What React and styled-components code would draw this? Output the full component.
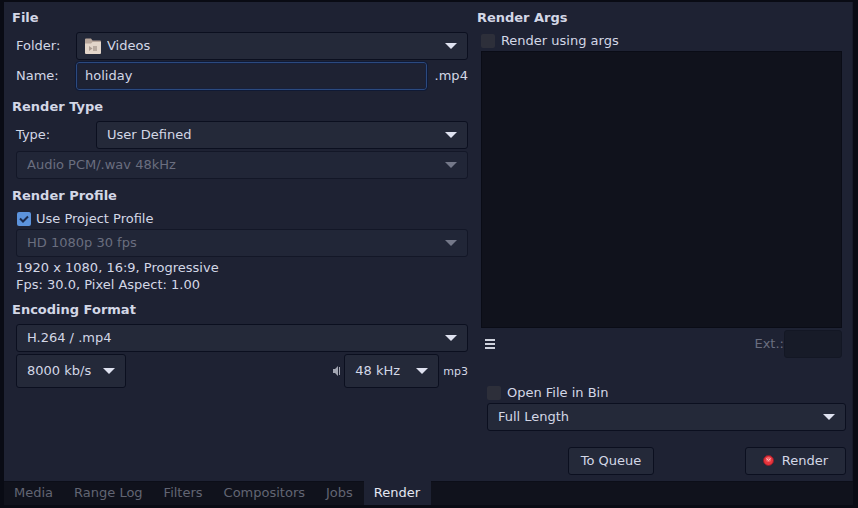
import React, { useState } from "react";
import styled, { createGlobalStyle, css } from "styled-components";

const color = {
  edge: "#090b14",
  well: "#10121c",
  panel: "#1e2233",
  control: "#242939",
  line: "#0b0f1f",
  text: "#d3d7e6",
  dim: "#6a6e7f",
};

const GlobalStyle = createGlobalStyle`
  * { box-sizing: border-box; }
  body {
    margin: 0;
    background: ${color.edge};
    color: ${color.text};
    font: 13px/17px "DejaVu Sans", Verdana, sans-serif;
  }
  button, input, select, textarea { font: inherit; color: inherit; margin: 0; }
`;

const Window = styled.div`
  display: flex;
  flex-direction: column;
  min-height: 100vh;
  padding: 2px 5px 3px 4px;
`;

const Panel = styled.main`
  flex: 1;
  display: grid;
  grid-template-columns: minmax(0, 21fr) minmax(0, 17fr);
  column-gap: 9px;
  padding: 7px 6px 6px 8px;
  background: ${color.panel};
  border-right: 1px solid #181b2a;
`;

const Column = styled.div`
  display: flex;
  flex-direction: column;
  gap: 8px;
`;

const Section = styled.section`
  display: flex;
  flex-direction: column;
  gap: 5px;
  flex: ${(p) => (p.$grow ? 1 : "none")};
`;

const Title = styled.h2`
  margin: 0;
  font-size: 13px;
  line-height: 18px;
  font-weight: bold;
`;

const Body = styled.div`
  display: flex;
  flex-direction: column;
  flex: 1;
  gap: 2px;
  padding-left: 4px;
  padding-right: ${(p) => (p.$inset ? "4px" : 0)};
`;

const Row = styled.div`
  display: flex;
  align-items: center;
`;

const FieldLabel = styled.label`
  flex: none;
  width: ${(p) => (p.$wide ? "80px" : "60px")};
  padding-bottom: 2px;
`;

const controlFrame = css`
  height: ${(p) => (p.$tall ? "34px" : "28px")};
  background: ${color.control};
  border: 1px solid ${color.line};
  border-radius: 3px;
`;

const SelectShell = styled.div`
  display: grid;
  align-items: center;
  flex: ${(p) => (p.$width ? "none" : 1)};
  width: ${(p) => p.$width || "auto"};
  min-width: 0;
  color: ${(p) => (p.$disabled ? color.dim : color.text)};
  > * { grid-area: 1 / 1; }
  > svg { pointer-events: none; z-index: 1; }
`;

const Native = styled.select`
  ${controlFrame}
  appearance: none;
  width: 100%;
  padding: 0 30px 2px ${(p) => (p.$icon ? "30px" : "10px")};
  outline: none;
  opacity: 1;
  &:disabled { background: #212637; border-color: #131727; color: ${color.dim}; }
`;

const Arrow = styled.svg`
  justify-self: end;
  margin-right: 11px;
  fill: ${(p) => (p.$disabled ? "#747889" : "#dfe2f0")};
`;

const FolderSvg = styled.svg`
  margin-left: 9px;
`;

function FolderIcon() {
  return (
    <FolderSvg width="16" height="16" viewBox="0 0 16 16" aria-hidden="true">
      <path d="M0 1.5Q0 .5 1 .5h5l1.5 2H15q1 0 1 1V8H0z" fill="#b7a69b" />
      <path d="M0 5.5h6l1.5-1.5H16V15q0 1-1 1H1q-1 0-1-1z" fill="#e3d6ca" />
      <path d="M4 8l3.5 2.5L4 13z" fill="#a99a90" />
      <path d="M8 8h4v5H8z" fill="#a99a90" />
      <path d="M9 8v5M11 8v5" stroke="#c8bbb0" strokeWidth="1" />
    </FolderSvg>
  );
}

function Select({ id, label, options, disabled, tall, width, icon }) {
  return (
    <SelectShell $disabled={disabled} $width={width}>
      <Native id={id} aria-label={label} disabled={disabled} $tall={tall} $icon={!!icon}>
        {options.map((o) => (
          <option key={o}>{o}</option>
        ))}
      </Native>
      {icon}
      <Arrow $disabled={disabled} width="12" height="6" viewBox="0 0 12 6" aria-hidden="true">
        <path d="M0 0h12L6 6z" />
      </Arrow>
    </SelectShell>
  );
}

const NameInput = styled.input`
  ${controlFrame}
  flex: 1;
  min-width: 0;
  padding: 0 8px 2px 8px;
  background: ${color.panel};
  border-color: #2b4a80;
  box-shadow: inset 0 0 0 1px #18213c;
  outline: 1px solid #101a35;
  outline-offset: 0;
`;

const Suffix = styled.span`
  flex: none;
  margin-left: ${(p) => (p.$small ? "4px" : "8px")};
  padding-bottom: ${(p) => (p.$small ? 0 : "2px")};
  font-size: ${(p) => (p.$small ? "11px" : "13px")};
`;

const Check = styled.label`
  display: flex;
  align-items: center;
  gap: 5px;
  height: 17px;
`;

const BoxShell = styled.span`
  display: grid;
  place-items: center;
  width: 15px;
  height: 14px;
  > * { grid-area: 1 / 1; }
  > svg { pointer-events: none; z-index: 1; }
`;

const Box = styled.input`
  appearance: none;
  width: 14px;
  height: 14px;
  border-radius: 2px;
  background: #2d2f3a;
  &:checked { background: #5c93dc; }
`;

function Checkbox({ children, defaultChecked }) {
  const [on, setOn] = useState(!!defaultChecked);
  return (
    <Check>
      <BoxShell>
        <Box type="checkbox" checked={on} onChange={(e) => setOn(e.target.checked)} />
        {on && (
          <svg width="10" height="10" viewBox="0 0 10 10" aria-hidden="true">
            <path d="M1 4.5L4 7.5l5-5" fill="none" stroke="#1b2a4c" strokeWidth="2" />
          </svg>
        )}
      </BoxShell>
      {children}
    </Check>
  );
}

const Info = styled.p`
  margin: 0;
`;

const Spacer = styled.div`
  flex: 1;
`;

const SpeakerSvg = styled.svg`
  flex: none;
  margin-right: 3px;
`;

const Args = styled.textarea`
  flex: 1;
  width: 100%;
  min-height: 120px;
  resize: none;
  padding: 4px;
  background: ${color.well};
  border: 1px solid #0a0c16;
  outline: none;
`;

const IconButton = styled.button`
  display: flex;
  padding: 4px;
  background: none;
  border: 0;
`;

const ExtLabel = styled.label`
  padding-bottom: 2px;
  color: ${color.dim};
`;

const ExtInput = styled.input`
  ${controlFrame}
  width: 58px;
  background: #171b28;
  border-color: #131724;
`;

const Output = styled.div`
  display: flex;
  flex-direction: column;
  gap: 2px;
  margin-top: 18px;
  padding-left: 10px;
`;

const Actions = styled.div`
  display: flex;
  justify-content: flex-end;
  gap: 91px;
  margin-top: 8px;
`;

const Button = styled.button`
  ${controlFrame}
  display: flex;
  align-items: center;
  justify-content: center;
  gap: ${(p) => (p.$wide ? "8px" : 0)};
  min-width: ${(p) => (p.$wide ? "101px" : "86px")};
  padding: 0 0 1px;
`;

const Tabs = styled.nav`
  display: flex;
  height: 24px;
  background: ${color.well};
  border-top: 1px solid #0c0e18;
`;

const Tab = styled.button`
  height: 24px;
  margin-top: -1px;
  padding: 0 11px 1px 10px;
  border: 0;
  background: ${(p) => (p.$active ? color.panel : "none")};
  color: ${(p) => (p.$active ? "#e4e7f2" : "#626573")};
`;

const TABS = ["Media", "Range Log", "Filters", "Compositors", "Jobs", "Render"];

export default function App() {
  const [tab, setTab] = useState("Render");
  return (
    <>
      <GlobalStyle />
      <Window>
        <Panel>
          <Column>
            <Section>
              <Title>File</Title>
              <Body>
                <Row>
                  <FieldLabel htmlFor="folder">Folder:</FieldLabel>
                  <Select id="folder" options={["Videos"]} icon={<FolderIcon />} />
                </Row>
                <Row>
                  <FieldLabel htmlFor="name">Name:</FieldLabel>
                  <NameInput id="name" defaultValue="holiday" />
                  <Suffix>.mp4</Suffix>
                </Row>
              </Body>
            </Section>

            <Section>
              <Title>Render Type</Title>
              <Body>
                <Row>
                  <FieldLabel htmlFor="type" $wide>Type:</FieldLabel>
                  <Select id="type" options={["User Defined"]} />
                </Row>
                <Row>
                  <Select label="Preset" options={["Audio PCM/.wav 48kHz"]} disabled />
                </Row>
              </Body>
            </Section>

            <Section>
              <Title>Render Profile</Title>
              <Body>
                <Checkbox defaultChecked>Use Project Profile</Checkbox>
                <Row>
                  <Select label="Profile" options={["HD 1080p 30 fps"]} disabled />
                </Row>
                <Info>
                  1920 x 1080, 16:9, Progressive
                  <br />
                  Fps: 30.0, Pixel Aspect: 1.00
                </Info>
              </Body>
            </Section>

            <Section>
              <Title>Encoding Format</Title>
              <Body>
                <Row>
                  <Select label="Encoding" options={["H.264 / .mp4"]} />
                </Row>
                <Row>
                  <Select label="Quality" options={["8000 kb/s"]} tall width="110px" />
                  <Spacer />
                  <SpeakerSvg width="8" height="10" viewBox="0 0 8 10" aria-hidden="true">
                    <path d="M0 3h2l3-3v10L2 7H0z" fill="#a3a6b2" />
                    <path d="M6.5 1v8" stroke="#a3a6b2" />
                  </SpeakerSvg>
                  <Select label="Sample rate" options={["48 kHz"]} tall width="95px" />
                  <Suffix $small>mp3</Suffix>
                </Row>
              </Body>
            </Section>
          </Column>

          <Column>
            <Section $grow>
              <Title>Render Args</Title>
              <Body $inset>
                <Checkbox>Render using args</Checkbox>
                <Args aria-label="Render args" />
                <Row>
                  <IconButton aria-label="Args menu">
                    <svg width="10" height="10" viewBox="0 0 10 10" aria-hidden="true">
                      <path d="M0 1h10M0 5h10M0 9h10" stroke="#cfd2dd" strokeWidth="2" />
                    </svg>
                  </IconButton>
                  <Spacer />
                  <ExtLabel htmlFor="ext">Ext.:</ExtLabel>
                  <ExtInput id="ext" disabled />
                </Row>
              </Body>
            </Section>

            <Output>
              <Checkbox>Open File in Bin</Checkbox>
              <Row>
                <Select label="Range" options={["Full Length"]} />
              </Row>
            </Output>

            <Actions>
              <Button>To Queue</Button>
              <Button $wide>
                <svg width="11" height="11" viewBox="0 0 11 11" aria-hidden="true">
                  <circle cx="5.5" cy="5.5" r="5" fill="#e8343c" stroke="#8c1f2b" />
                  <circle cx="5.5" cy="4.5" r="2.5" fill="#f4686c" />
                  <path d="M3.5 3.5L5.5 5.5l2-2" fill="none" stroke="#ffb9ba" />
                </svg>
                Render
              </Button>
            </Actions>
          </Column>
        </Panel>

        <Tabs>
          {TABS.map((name) => (
            <Tab key={name} $active={tab === name} onClick={() => setTab(name)}>
              {name}
            </Tab>
          ))}
        </Tabs>
      </Window>
    </>
  );
}
